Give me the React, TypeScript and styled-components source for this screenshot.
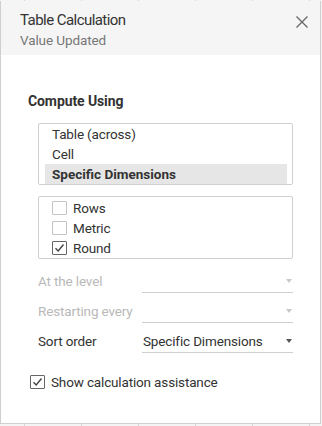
import styled, { createGlobalStyle } from "styled-components";

const Global = createGlobalStyle`
  html, body {
    margin: 0;
    padding: 0;
  }
  body {
    width: 322px;
    height: 426px;
    overflow: hidden;
    font-family: Roboto, "Liberation Sans", Arial, sans-serif;
    background-color: #f4f4f4;
    background-image: repeating-linear-gradient(
      to right,
      transparent 0,
      transparent 24px,
      #d6d6d6 24px,
      #d6d6d6 25px,
      transparent 25px,
      transparent 57px
    );
  }
`;

const Dialog = styled.div`
  box-sizing: border-box;
  margin-top: 1px;
  width: 321px;
  height: 423px;
  background: #fff;
  border: 1px solid #cfcfcf;
  border-top: none;
  display: flex;
  flex-direction: column;
`;

const Header = styled.div`
  position: relative;
  background: #f5f5f5;
  height: 54px;
  padding: 8px 0 0 19px;
  box-sizing: border-box;
`;

const Title = styled.div`
  font-size: 15px;
  letter-spacing: -0.55px;
  color: #333;
  line-height: 22px;
`;

const Subtitle = styled.div`
  font-size: 13.5px;
  letter-spacing: -0.1px;
  color: #777;
  line-height: 18px;
`;

const CloseButton = styled.button`
  position: absolute;
  top: 13px;
  right: 10px;
  width: 16px;
  height: 16px;
  padding: 0;
  border: none;
  background: none;
  display: flex;
  align-items: center;
  justify-content: center;
`;

const Body = styled.div`
  padding: 37px 27px 0 37px;
  display: flex;
  flex-direction: column;
  font-size: 13.5px;
  letter-spacing: -0.15px;
`;

const SectionTitle = styled.div`
  font-size: 14px;
  font-weight: 700;
  letter-spacing: -0.1px;
  color: #333;
  margin-left: -10px;
  line-height: 18px;
`;

const Box = styled.div<{ $top: number }>`
  margin-top: ${(p) => p.$top}px;
  border: 1px solid #cfcfcf;
  border-radius: 2px;
  padding: 0 5px 0 6px;
  display: flex;
  flex-direction: column;
`;

const ListItem = styled.div<{ $selected?: boolean }>`
  height: 20px;
  line-height: 20px;
  padding-left: 7px;
  color: #333;
  font-weight: ${(p) => (p.$selected ? 700 : 400)};
  letter-spacing: ${(p) => (p.$selected ? "0" : "-0.15px")};
  background: ${(p) => (p.$selected ? "#e6e6e6" : "transparent")};
`;

const CheckRow = styled.label`
  height: 20px;
  display: flex;
  align-items: center;
  gap: 6px;
  padding-left: 7px;
  color: #333;
`;

const Check = styled.span<{ $checked?: boolean }>`
  box-sizing: border-box;
  width: 15px;
  height: 14px;
  border: 1px solid ${(p) => (p.$checked ? "#666" : "#c4c4c4")};
  border-radius: 1px;
  background: #fff;
  display: flex;
  align-items: center;
  justify-content: center;
`;

const FieldRow = styled.div`
  height: 30px;
  display: flex;
  align-items: flex-end;
`;

const Label = styled.div<{ $disabled?: boolean }>`
  width: 104px;
  color: ${(p) => (p.$disabled ? "#b9b9b9" : "#333")};
  line-height: 22px;
  padding-bottom: 1px;
`;

const Select = styled.div`
  flex: 1;
  height: 23px;
  box-sizing: border-box;
  border-bottom: 1px solid #cfcfcf;
  display: flex;
  align-items: center;
  justify-content: space-between;
  padding: 0 1px 1px 1px;
  color: #333;
`;

const Arrow = styled.span<{ $disabled?: boolean }>`
  width: 0;
  height: 0;
  border-left: 3.5px solid transparent;
  border-right: 3.5px solid transparent;
  border-top: 4px solid ${(p) => (p.$disabled ? "#c8c8c8" : "#555")};
`;

const Fields = styled.div`
  margin-top: 4px;
  display: flex;
  flex-direction: column;
`;

const Assist = styled(CheckRow)`
  margin: 19px 0 0 -8px;
  padding-left: 0;
`;

function Tick() {
  return (
    <svg width="11" height="10" viewBox="0 0 11 10">
      <path d="M1.5 5.2 L4.2 8 L9.5 1.5" fill="none" stroke="#444" strokeWidth="1.4" />
    </svg>
  );
}

export default function App() {
  return (
    <>
      <Global />
      <Dialog>
        <Header>
          <Title>Table Calculation</Title>
          <Subtitle>Value Updated</Subtitle>
          <CloseButton aria-label="Close">
            <svg width="12" height="12" viewBox="0 0 12 12">
              <path d="M0.5 0.5 L11.5 11.5 M11.5 0.5 L0.5 11.5" stroke="#666" strokeWidth="1.3" />
            </svg>
          </CloseButton>
        </Header>
        <Body>
          <SectionTitle>Compute Using</SectionTitle>
          <Box $top={13}>
            <ListItem>Table (across)</ListItem>
            <ListItem>Cell</ListItem>
            <ListItem $selected>Specific Dimensions</ListItem>
          </Box>
          <Box $top={11}>
            <div style={{ height: 1 }} />
            <CheckRow>
              <Check />
              Rows
            </CheckRow>
            <CheckRow>
              <Check />
              Metric
            </CheckRow>
            <CheckRow>
              <Check $checked>
                <Tick />
              </Check>
              Round
            </CheckRow>
          </Box>
          <Fields>
            <FieldRow>
              <Label $disabled>At the level</Label>
              <Select>
                <span />
                <Arrow $disabled />
              </Select>
            </FieldRow>
            <FieldRow>
              <Label $disabled>Restarting every</Label>
              <Select>
                <span />
                <Arrow $disabled />
              </Select>
            </FieldRow>
            <FieldRow>
              <Label>Sort order</Label>
              <Select>
                <span>Specific Dimensions</span>
                <Arrow />
              </Select>
            </FieldRow>
          </Fields>
          <Assist>
            <Check $checked>
              <Tick />
            </Check>
            Show calculation assistance
          </Assist>
        </Body>
      </Dialog>
    </>
  );
}
